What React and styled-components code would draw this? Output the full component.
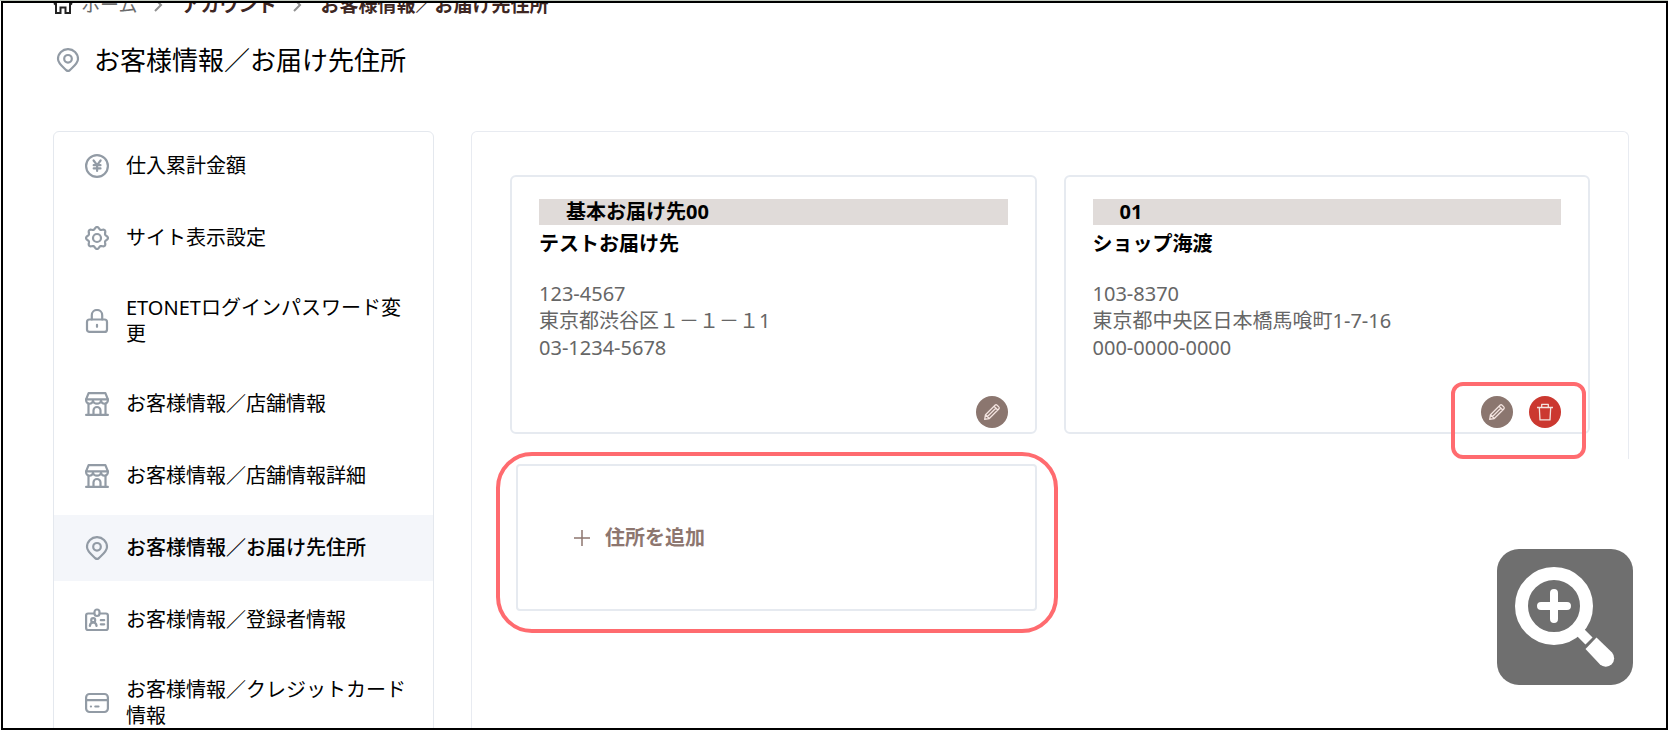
import styled, { createGlobalStyle, css } from "styled-components";
import React from "react";

const GlobalStyle = createGlobalStyle`
  * {
    box-sizing: border-box;
  }

  body {
    margin: 0;
    background: #fff;
    color: #000;
    font-family: "Noto Sans", "Noto Sans CJK JP", sans-serif;
    font-size: 20px;
    line-height: 26px;
  }
`;

const Page = styled.div`
  display: flex;
  height: 100vh;
  padding-left: 1px;
  border-top: 1px solid #c3cbc0;
`;

const Frame = styled.div`
  flex: 1;
  display: flex;
  flex-direction: column;
  overflow: hidden;
  padding: 0 37px 0 50px;
  border: 2px solid #000;
`;

const Breadcrumb = styled.nav`
  display: flex;
  align-items: center;
  gap: 16px;
  margin-top: -11px;
  font-size: 19px;
`;

const Crumb = styled.a`
  display: flex;
  align-items: center;
  gap: 8px;
  color: ${({ $home }) => ($home ? "#6b6b6b" : "#3e2723")};
  font-weight: ${({ $home }) => ($home ? 400 : 700)};
  text-decoration: none;
`;

const Heading = styled.header`
  display: flex;
  align-items: center;
  gap: 14px;
  padding-left: 3px;
  margin: 24px 0 53px;
`;

const Title = styled.h1`
  margin: 0;
  font-size: 26px;
  font-weight: 400;
  line-height: 36px;
`;

const Columns = styled.div`
  flex: 1 0 auto;
  display: grid;
  grid-template-columns: 381px 1fr;
  gap: 37px;
`;

const SideMenu = styled.nav`
  display: flex;
  flex-direction: column;
  gap: 6px;
  padding-top: 1px;
  border: 1px solid #e4e8ee;
  border-radius: 6px;
`;

const MenuItem = styled.a`
  display: flex;
  align-items: center;
  gap: 17px;
  min-height: 66px;
  padding: 18px 26px 18px 31px;
  color: #000;
  text-decoration: none;
  ${({ $active }) =>
    $active &&
    css`
      background: #f4f6fa;
      font-weight: 500;
    `}
`;

const LineIcon = styled.svg`
  flex: none;
  width: 24px;
  height: 24px;
  fill: none;
  stroke: #929ba5;
  stroke-width: 2.2;
  stroke-linecap: round;
  stroke-linejoin: round;
`;

const HomeSvg = styled.svg`
  width: 20px;
  height: 20px;
  fill: none;
  stroke: #222;
  stroke-width: 2;
`;

const ChevronSvg = styled.svg`
  width: 12px;
  height: 20px;
  fill: none;
  stroke: #8f8f8f;
  stroke-width: 2;
`;

const Main = styled.main`
  display: flex;
  flex-direction: column;
`;

const CardGrid = styled.div`
  display: grid;
  grid-template-columns: 1fr 1fr;
  gap: 27px;
`;

const Saved = styled(CardGrid)`
  padding: 43px 38px 25px;
  border: 1px solid #e8ebf1;
  border-bottom: none;
  border-radius: 6px 6px 0 0;
`;

const Extra = styled(CardGrid)`
  flex: 1;
  align-items: start;
  padding: 5px 38px 118px;
  border-left: 1px solid #e8ebf1;
`;

const Card = styled.article`
  display: flex;
  flex-direction: column;
  padding: 22px 27px 4px;
  border: 2px solid #e6eaf0;
  border-radius: 6px;
`;

const CardLabel = styled.h2`
  margin: 0 0 6px;
  padding-left: 27px;
  background: #e0dbd9;
  font-size: 20px;
  font-weight: 700;
`;

const CardName = styled.h3`
  margin: 0 0 23px;
  font-size: 20px;
  font-weight: 700;
`;

const Address = styled.address`
  color: #666;
  font-style: normal;
  line-height: 27px;
`;

const AddressLine = styled.div``;

const callout = css`
  position: relative;

  &::after {
    content: "";
    position: absolute;
    border: 4px solid #ff6b6f;
    pointer-events: none;
  }
`;

const Actions = styled.div`
  align-self: flex-end;
  display: flex;
  gap: 16px;
  margin-top: 35px;
  ${({ $marked }) =>
    $marked &&
    css`
      ${callout}

      &::after {
        inset: -14px -25px -31px -30px;
        border-radius: 12px;
      }
    `}
`;

const RoundButton = styled.button`
  display: flex;
  align-items: center;
  justify-content: center;
  width: 32px;
  height: 32px;
  padding: 0;
  border: none;
  border-radius: 50%;
  background: ${({ $danger }) => ($danger ? "#cb3830" : "#8b766f")};
  cursor: pointer;
`;

const ButtonSvg = styled.svg`
  width: 18px;
  height: 18px;
  fill: none;
  stroke: #f3e3df;
  stroke-width: 1.3;
  stroke-linejoin: round;
`;

const AddArea = styled.div`
  display: flex;
  margin-left: 6px;
  ${callout}

  &::after {
    inset: -12px -21px -22px -20px;
    border-radius: 36px;
  }
`;

const AddButton = styled.button`
  flex: 1;
  display: flex;
  align-items: center;
  gap: 14px;
  min-height: 147px;
  padding: 0 55px;
  border: 2px solid #e6eaf0;
  border-radius: 4px;
  background: #fff;
  color: #8d766f;
  font: inherit;
  font-weight: 700;
  cursor: pointer;
`;

const PlusSvg = styled.svg`
  width: 18px;
  height: 18px;
  stroke: #8d766f;
  stroke-width: 1.5;
`;

const ZoomButton = styled.button`
  position: fixed;
  right: 35px;
  bottom: 45px;
  width: 136px;
  height: 136px;
  padding: 0;
  border: none;
  border-radius: 22px;
  background: #6f6f6f;
  cursor: zoom-in;
`;

const ZoomSvg = styled.svg`
  display: block;
  width: 136px;
  height: 136px;
  fill: none;
  stroke: #fff;
`;

// eight soft teeth around the centre
const gearPoints = Array.from({ length: 96 }, (_, i) => {
  const a = (i / 96) * Math.PI * 2;
  const r = 9.9 + 1.1 * Math.cos(8 * a);
  return `${12 + r * Math.sin(a)},${12 - r * Math.cos(a)}`;
}).join(" ");

const YenIcon = () => (
  <LineIcon viewBox="0 0 24 24">
    <circle cx="12" cy="12" r="10.9" />
    <path d="M8.6 6.5l3.5 4.6 3.5-4.6M12.1 11v6M8.7 11.2h6.8M8.7 14.4h6.8" />
  </LineIcon>
);

const GearIcon = () => (
  <LineIcon viewBox="0 0 24 24">
    <polygon points={gearPoints} />
    <circle cx="12" cy="12" r="4" />
  </LineIcon>
);

const LockIcon = () => (
  <LineIcon viewBox="0 0 24 24">
    <rect x="2" y="10.5" width="20" height="12.400" rx="2.5" />
    <path d="M6.8 10.5V6.2a5.2 5.2 0 0 1 10.4 0v4.3M12 15.8v2" />
  </LineIcon>
);

const StoreIcon = () => (
  <LineIcon viewBox="0 0 24 24">
    <path d="M3.6 1.100h16.8L22.900 7.3H1.100L3.6 1.100z" />
    <path d="M1.100 7.3v1a3.3 3.3 0 0 0 6.900 0 3.9 3.3 0 0 0 8 0 3.3 3.3 0 0 0 6.900 0v-1" />
    <path d="M3.5 11.5V22.900M20.5 11.5V22.900M1.100 22.900h21.800M8.5 22.900v-4.400a3.500 3.500 0 0 1 7 0v4.400" />
  </LineIcon>
);

const PinIcon = () => (
  <LineIcon viewBox="0 0 24 24">
    <path d="M12 1.100a9.900 9.900 0 0 1 10 9.900c0 4.300-4.500 7.600-8.200 11.100a2.600 2.600 0 0 1-3.600 0C6.500 18.600 2 15.300 2 11A9.900 9.900 0 0 1 12 1.100z" />
    <circle cx="12" cy="10.8" r="3.8" />
  </LineIcon>
);

const BadgeIcon = () => (
  <LineIcon viewBox="0 0 24 24">
    <path d="M9 5.500H3.100a2 2 0 0 0-2 2V20a2 2 0 0 0 2 2h17.800a2 2 0 0 0 2-2V7.500a2 2 0 0 0-2-2H15" />
    <rect x="9.500" y="1.500" width="5" height="6.500" rx="2.500" />
    <circle cx="8.200" cy="12.200" r="2" />
    <path d="M4.800 18c.3-2.400 1.600-3.600 3.400-3.600s3.100 1.200 3.400 3.600M15.800 12.200h3.400M15.800 16.300h3.400" />
  </LineIcon>
);

const CreditCardIcon = () => (
  <LineIcon viewBox="0 0 24 24">
    <rect x="1.100" y="3" width="21.800" height="18" rx="3.500" />
    <path d="M1.100 9.200h21.800M5.900 15.500h.1M10.300 15.500h3.200" />
  </LineIcon>
);

const HomeIcon = () => (
  <HomeSvg viewBox="0 0 20 20">
    <path d="M1 9.500l9-8 9 8M3 8.500V18h4.500v-5.500h5V18H17V8.500" />
  </HomeSvg>
);

const Chevron = () => (
  <ChevronSvg viewBox="0 0 12 20" aria-hidden="true">
    <path d="M2 4l6 6-6 6" />
  </ChevronSvg>
);

const PencilIcon = () => (
  <ButtonSvg viewBox="0 0 18 18">
    <path d="M1.700 16.300l.8-4.600L12 2.200a1.500 1.500 0 0 1 2.100 0l1.700 1.700a1.500 1.500 0 0 1 0 2.100l-9.500 9.500-4.600.8zM2.500 11.700l3.800 3.800M11 3.200L14.800 7M4.500 13.500L13 5" />
  </ButtonSvg>
);

const TrashIcon = () => (
  <ButtonSvg viewBox="0 0 18 18">
    <path d="M1 4.500h16M3.300 4.500l.7 12.400h10l.7-12.400M5.700 4.500V1.400h6.600v3.100" />
  </ButtonSvg>
);

const menu = [
  { label: "仕入累計金額", Icon: YenIcon },
  { label: "サイト表示設定", Icon: GearIcon },
  { label: "ETONETログインパスワード変更", Icon: LockIcon },
  { label: "お客様情報／店舗情報", Icon: StoreIcon },
  { label: "お客様情報／店舗情報詳細", Icon: StoreIcon },
  { label: "お客様情報／お届け先住所", Icon: PinIcon, active: true },
  { label: "お客様情報／登録者情報", Icon: BadgeIcon },
  { label: "お客様情報／クレジットカード情報", Icon: CreditCardIcon },
];

const addresses = [
  {
    label: "基本お届け先00",
    name: "テストお届け先",
    lines: ["123-4567", "東京都渋谷区１－１－１1", "03-1234-5678"],
  },
  {
    label: "01",
    name: "ショップ海渡",
    lines: ["103-8370", "東京都中央区日本橋馬喰町1-7-16", "000-0000-0000"],
    removable: true,
  },
];

function AddressCard({ label, name, lines, removable }) {
  return (
    <Card>
      <CardLabel>{label}</CardLabel>
      <CardName>{name}</CardName>
      <Address>
        {lines.map((line) => (
          <AddressLine key={line}>{line}</AddressLine>
        ))}
      </Address>
      <Actions $marked={removable}>
        <RoundButton type="button" aria-label="編集">
          <PencilIcon />
        </RoundButton>
        {removable && (
          <RoundButton type="button" aria-label="削除" $danger>
            <TrashIcon />
          </RoundButton>
        )}
      </Actions>
    </Card>
  );
}

export default function App() {
  return (
    <Page lang="ja">
      <GlobalStyle />
      <Frame>
        <Breadcrumb>
          <Crumb href="#" $home>
            <HomeIcon />
            ホーム
          </Crumb>
          <Chevron />
          <Crumb href="#">アカウント</Crumb>
          <Chevron />
          <Crumb href="#">お客様情報／お届け先住所</Crumb>
        </Breadcrumb>
        <Heading>
          <PinIcon />
          <Title>お客様情報／お届け先住所</Title>
        </Heading>
        <Columns>
          <SideMenu>
            {menu.map(({ label, Icon, active }) => (
              <MenuItem key={label} href="#" $active={active}>
                <Icon />
                {label}
              </MenuItem>
            ))}
          </SideMenu>
          <Main>
            <Saved>
              {addresses.map((address) => (
                <AddressCard key={address.label} {...address} />
              ))}
            </Saved>
            <Extra>
              <AddArea>
                <AddButton type="button">
                  <PlusSvg viewBox="0 0 18 18">
                    <path d="M9 1v16M1 9h16" />
                  </PlusSvg>
                  住所を追加
                </AddButton>
              </AddArea>
            </Extra>
          </Main>
        </Columns>
      </Frame>
      <ZoomButton type="button" aria-label="拡大">
        <ZoomSvg viewBox="0 0 136 136">
          <circle cx="57" cy="57" r="32.500" strokeWidth="13" />
          <path d="M57 44v26M44 57h26" strokeWidth="8" strokeLinecap="round" />
          <path d="M82 82l10 10" strokeWidth="10" />
          <path
            d="M88.500 100L99.500 88.500 115 103.500a8.500 8.500 0 0 1-12 12z"
            fill="#fff"
            stroke="none"
          />
        </ZoomSvg>
      </ZoomButton>
    </Page>
  );
}
